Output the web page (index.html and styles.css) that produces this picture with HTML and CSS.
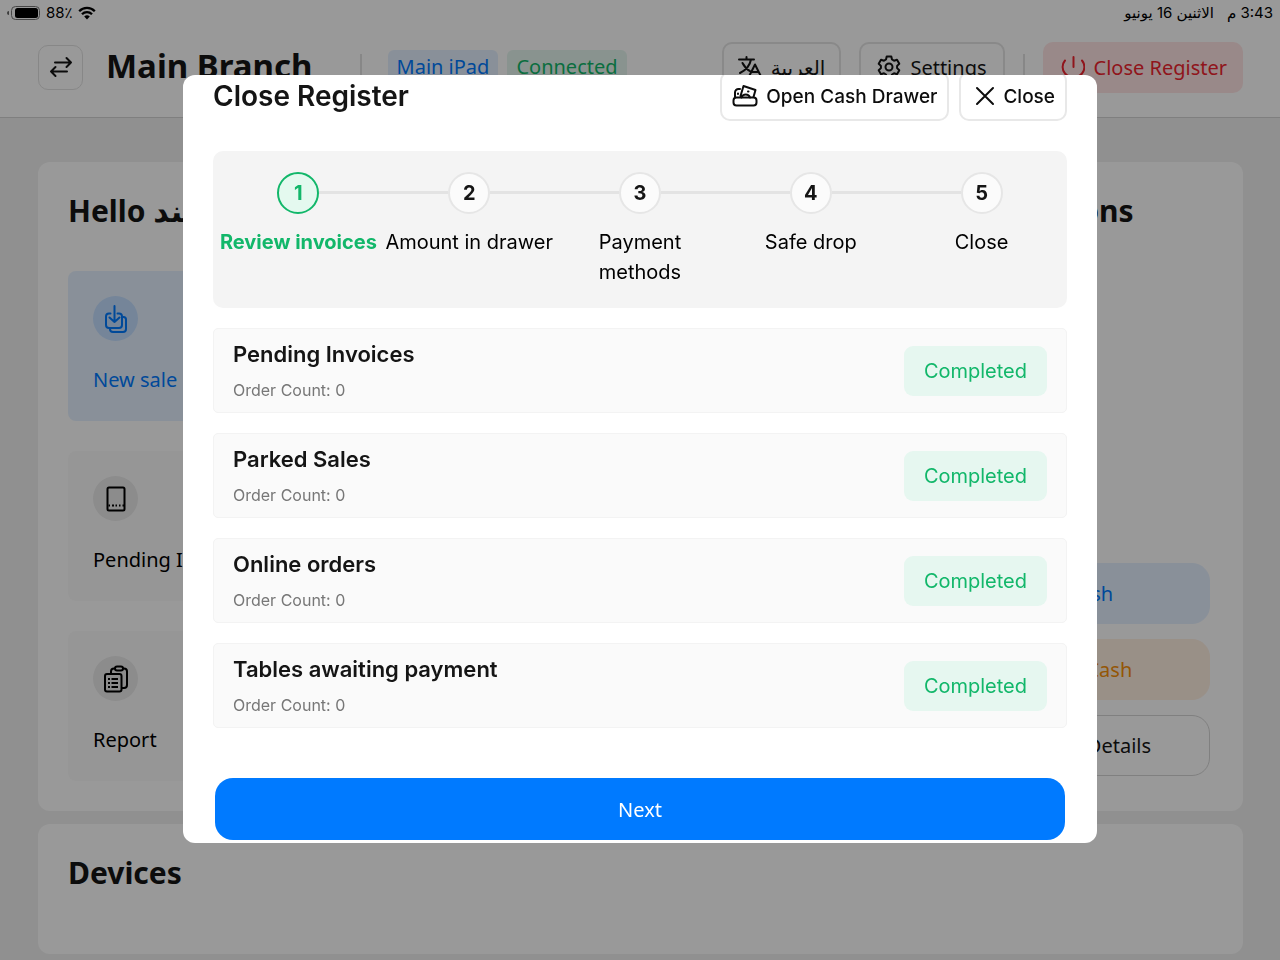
FILE: index.html
```html
<!DOCTYPE html>
<html lang="en">
<head>
<meta charset="utf-8">
<meta name="viewport" content="width=device-width, initial-scale=1">
<title>Close Register</title>
<link rel="stylesheet" href="styles.css">
</head>
<body>
<div class="app">
  <div class="status" dir="rtl" lang="ar">
    <div class="status-time"><span>3:43 م</span><span>الاثنين 16 يونيو</span></div>
    <div class="status-power" dir="ltr">
      <svg width="34" height="16" viewBox="0 0 34 16" aria-hidden="true"><path d="M2 6v4a2 2 0 0 1 0-4z" fill="#666"/><rect x="4.500" y="1.500" width="28" height="13" rx="4" fill="none" stroke="#777"/><rect x="8" y="3" width="23" height="10" rx="2.500"/></svg>
      <span dir="rtl">88٪</span>
      <svg width="18" height="14" viewBox="0 0 18 14" fill="none" stroke="#000" stroke-width="2.300" aria-hidden="true"><path d="M1.200 5.200a11 11 0 0 1 15.600 0M4 8.300a7 7 0 0 1 10 0"/><path d="M9 13.500 6.200 10.600a4 4 0 0 1 5.600 0z" fill="#000" stroke="none"/></svg>
    </div>
  </div>

  <header class="topbar">
    <button class="icon-btn" aria-label="Switch branch"><svg width="24" height="24" viewBox="0 0 24 24" class="line"><path d="M6 7.500h16M17.500 3l4.500 4.500-4.500 4.500M18 16.500H2M6.500 12 2 16.500 6.500 21"/></svg></button>
    <h1 class="branch">Main Branch</h1>
    <span class="divider"></span>
    <span class="tag tag-blue">Main iPad</span>
    <span class="tag tag-green">Connected</span>
    <div class="actions">
      <button class="btn btn-lang"><svg width="24" height="24" viewBox="0 0 24 24" class="line"><path d="M1 4.500h15M8.500 2v2.500M13 4.500C12 10 8 15 2 18M4.500 8c2 4 4.500 6.500 8 8.500M11.500 20.500 17 9.500l5.500 11M13.500 17h7"/></svg><span lang="ar">العربية</span></button>
      <button class="btn"><svg width="24" height="24" viewBox="0 0 24 24" class="line"><circle cx="12" cy="12" r="3.500"/><path d="M9.700 1.500h4.600l.7 3 2 1.200 3-.9 2.300 4-2.200 2.100v2.200l2.200 2.100-2.300 4-3-.9-2 1.200-.7 3H9.700l-.7-3-2-1.200-3 .9-2.300-4 2.200-2.100v-2.200L1.700 8.800l2.300-4 3 .9 2-1.200z"/></svg>Settings</button>
      <span class="divider"></span>
      <button class="btn btn-red"><svg width="24" height="24" viewBox="0 0 24 24" class="line"><path d="M12.500 2v10M4 5.500a10 10 0 0 0 0 13M21 5.500a10 10 0 0 1 0 13M4 18.500a11 11 0 0 0 17 0"/></svg>Close Register</button>
    </div>
  </header>

  <main class="page">
    <section class="panel home">
      <div class="home-main">
        <h2 class="heading">Hello <span lang="ar">مهند</span></h2>
        <div class="tiles">
          <button class="tile tile-blue"><span class="dot"><svg width="24" height="30" viewBox="0 0 24 30" class="line"><path d="M10.500 2v16M5.500 13.500l5 4.500 5-4.500M6.500 9.500H5a3 3 0 0 0-3 3V21a3 3 0 0 0 3 3h10a3 3 0 0 0 3-3v-8.500a3 3 0 0 0-3-3h-1.500M18.500 13h1a2.500 2.500 0 0 1 2.500 2.500V25a3 3 0 0 1-3 3H9a3 3 0 0 1-3-3v-1"/></svg></span>New sale</button>
          <button class="tile"><span class="dot"><svg width="20" height="26" viewBox="0 0 20 26" class="line"><rect x="1.500" y="1.500" width="17" height="23" rx="1.500"/><path d="M2.500 19.500h1.500M6 19.500h2M9.500 19.500h1.500M13 19.500h1.500M16.500 19.500h1.500" stroke-linecap="butt" class="dash"/></svg></span>Pending Invoices</button>
          <button class="tile"><span class="dot"><svg width="24" height="28" viewBox="0 0 24 28" class="line"><path d="M7 8.500V6.500a3 3 0 0 1 3-3h1M19 3.500h1a3 3 0 0 1 3 3V20a3 3 0 0 1-3 3h-2"/><rect x="11" y="1.500" width="8" height="4" rx="2"/><rect x="1" y="9" width="16.500" height="17.500" rx="2"/><path d="M4 14h2M7.500 14h6.500M4 18h2M7.500 18h6.500M4 22h2M7.500 22h6.500" class="dash"/></svg></span>Report</button>
        </div>
      </div>
      <div class="home-side">
        <h2 class="heading">Quick Actions</h2>
        <div class="side-buttons">
          <button class="wide wide-blue">Add Cash</button>
          <button class="wide wide-orange">Remove Cash</button>
          <button class="wide">View Cash Details</button>
        </div>
      </div>
    </section>
    <section class="panel devices"><h2 class="heading">Devices</h2></section>
  </main>
</div>

<div class="overlay">
  <div class="modal" role="dialog" aria-modal="true" aria-labelledby="modal-title">
    <div class="modal-head">
      <h2 class="modal-title" id="modal-title">Close Register</h2>
      <button class="modal-btn"><svg width="26" height="24" viewBox="0 0 26 24" class="line"><rect x="1.500" y="13.500" width="23" height="8" rx="3"/><path d="M3 13V8.500A3.500 3.500 0 0 1 6.500 5H8M8.500 12 11.500 2l12 4-2 7M9.500 13.500a4.500 4.500 0 0 1 8.500 0"/><path d="M16 7.500h.5M6 9.500v.5"/></svg>Open Cash Drawer</button>
      <button class="modal-btn modal-close"><svg width="20" height="20" viewBox="0 0 20 20" class="line"><path d="m2 2 16 16M18 2 2 18"/></svg>Close</button>
    </div>

    <ol class="steps">
      <li class="step active"><span class="num">1</span>Review invoices</li>
      <li class="step"><span class="num">2</span>Amount in drawer</li>
      <li class="step"><span class="num">3</span>Payment methods</li>
      <li class="step"><span class="num">4</span>Safe drop</li>
      <li class="step"><span class="num">5</span>Close</li>
    </ol>

    <div class="checks">
      <div class="check"><div><h3>Pending Invoices</h3><p>Order Count: 0</p></div><span class="done">Completed</span></div>
      <div class="check"><div><h3>Parked Sales</h3><p>Order Count: 0</p></div><span class="done">Completed</span></div>
      <div class="check"><div><h3>Online orders</h3><p>Order Count: 0</p></div><span class="done">Completed</span></div>
      <div class="check"><div><h3>Tables awaiting payment</h3><p>Order Count: 0</p></div><span class="done">Completed</span></div>
    </div>

    <button class="next">Next</button>
  </div>
</div>
</body>
</html>
```
FILE: styles.css
```css
* { box-sizing: border-box; }
body { margin: 0; background: #f1f1f1; color: #151515; font-family: "Noto Sans", "DejaVu Sans", sans-serif; font-size: 20px; }
h1, h2, h3, p, ol { margin: 0; padding: 0; }
button { font: inherit; color: inherit; margin: 0; cursor: pointer; }
.line { fill: none; stroke: currentColor; stroke-width: 2; stroke-linecap: round; stroke-linejoin: round; flex: none; }
.dash { stroke-linecap: butt; }

.status { display: flex; justify-content: space-between; align-items: center; height: 25px; padding: 0 7px; background: #fff; color: #000; font: 15px/20px Inter, "DejaVu Sans", sans-serif; }
.status-time { display: flex; gap: 13px; }
.status-power { display: flex; align-items: center; gap: 5px; }

.topbar { display: flex; align-items: center; height: 93px; padding: 0 37px 8px 38px; background: #fff; border-bottom: 1px solid #d4d4d4; }
.icon-btn { display: grid; place-items: center; width: 45px; height: 45px; padding: 0; background: none; border: 1px solid #e2e2e2; border-radius: 10px; }
.branch { margin-left: 23px; padding-bottom: 3px; font-size: 33px; line-height: 42px; font-weight: 700; }
.divider { width: 2px; height: 27px; background: #e2e2e2; }
.branch + .divider { margin: 0 26px 0 47px; }
.tag { padding: 0 9px; border-radius: 6px; line-height: 34px; }
.tag-blue { background: #e5f1ff; color: #007aff; margin-right: 9px; }
.tag-green { background: #e4f6ef; color: #12b76a; }
.actions { display: flex; align-items: center; gap: 18px; margin-left: auto; }
.btn { display: flex; align-items: center; gap: 9px; height: 51px; padding: 0 16px; background: none; border: 2px solid #e4e4e4; border-radius: 10px; }
.btn-lang { padding: 0 14px; }
.btn-red { padding: 0 14px 0 16px; background: #ffe5e5; border-color: #ffe5e5; color: #f0242f; }

.page { display: flex; flex-direction: column; gap: 13px; padding: 44px 37px 6px 38px; }
.panel { background: #fff; border-radius: 12px; padding: 30px; }
.home { display: grid; grid-template-columns: 1fr 282px; gap: 60px; padding-right: 33px; }
.home-side { display: flex; flex-direction: column; justify-content: space-between; padding-bottom: 5px; }
.heading { font-size: 30px; line-height: 38px; font-weight: 700; }
.tiles { display: grid; gap: 30px; margin-top: 41px; }
.tile { display: flex; flex-direction: column; align-items: flex-start; gap: 24px; height: 150px; padding: 25px; background: #fbfbfb; border: 0; border-radius: 8px; color: #000; line-height: 30px; }
.tile-blue { background: #e5f1ff; color: #007aff; }
.dot { display: grid; place-items: center; width: 45px; height: 45px; border-radius: 50%; background: #e9e9e9; }
.tile-blue .dot { background: #c3deff; }
.side-buttons { display: grid; gap: 15px; }
.wide { height: 61px; background: none; border: 1px solid #d6d6d6; border-radius: 18px; }
.wide-blue { background: #e5f1ff; border-color: #e5f1ff; color: #007aff; }
.wide-orange { background: #fff0e2; border-color: #fff0e2; color: #f79009; }
.devices { min-height: 130px; }

.overlay { position: fixed; inset: 0; display: flex; justify-content: center; align-items: flex-start; padding: 75px 20px 20px; background: rgba(0, 0, 0, .4); font-family: Inter, sans-serif; }
.modal { width: 100%; max-width: 914px; padding: 0 30px 3px; background: #fff; border-radius: 12px; overflow: hidden; }
.modal-head { display: flex; align-items: flex-end; gap: 10px; height: 46px; }
.modal-title { margin-right: auto; font-size: 28px; line-height: 50px; font-weight: 600; }
.modal-btn { display: flex; align-items: center; gap: 8px; height: 50px; padding: 0 10px; background: #fff; border: 2px solid #e8e8e8; border-radius: 10px; font-size: 19px; font-weight: 500; color: #0d0d0d; }
.modal-close { padding-left: 14px; }
.steps { display: grid; grid-template-columns: repeat(5, 1fr); margin-top: 30px; padding: 21px 0; background: #f4f4f4; border-radius: 10px; list-style: none; }
.step { position: relative; display: flex; flex-direction: column; align-items: center; gap: 13px; padding: 0 1px; text-align: center; line-height: 30px; color: #000; }
.step + .step::before { content: ""; position: absolute; top: 19px; right: calc(50% + 21px); width: calc(100% - 42px); height: 3px; background: #e3e3e3; }
.num { display: grid; place-items: center; width: 42px; height: 42px; border: 2px solid #e6e6e6; border-radius: 50%; background: #fbfbfb; font-weight: 700; color: #151515; }
.step.active { color: #12b76a; font-weight: 700; }
.active .num { border-color: #12b76a; background: #e4f9ef; color: #12b76a; }
.checks { display: grid; gap: 20px; margin-top: 20px; }
.check { display: flex; justify-content: space-between; align-items: center; height: 85px; padding: 0 19px; background: #fafafa; border: 1px solid #f3f3f3; border-radius: 5px; }
.check h3 { font-size: 22px; line-height: 34px; font-weight: 600; }
.check p { margin-top: 4px; font-size: 16px; line-height: 30px; color: #777; }
.done { padding: 0 20px; border-radius: 9px; background: #e6f7f0; color: #12b76a; line-height: 50px; }
.next { display: block; width: calc(100% - 4px); height: 62px; margin: 50px 2px 0; background: #007aff; border: 0; border-radius: 18px; color: #fff; font-family: "Noto Sans", sans-serif; }
```
